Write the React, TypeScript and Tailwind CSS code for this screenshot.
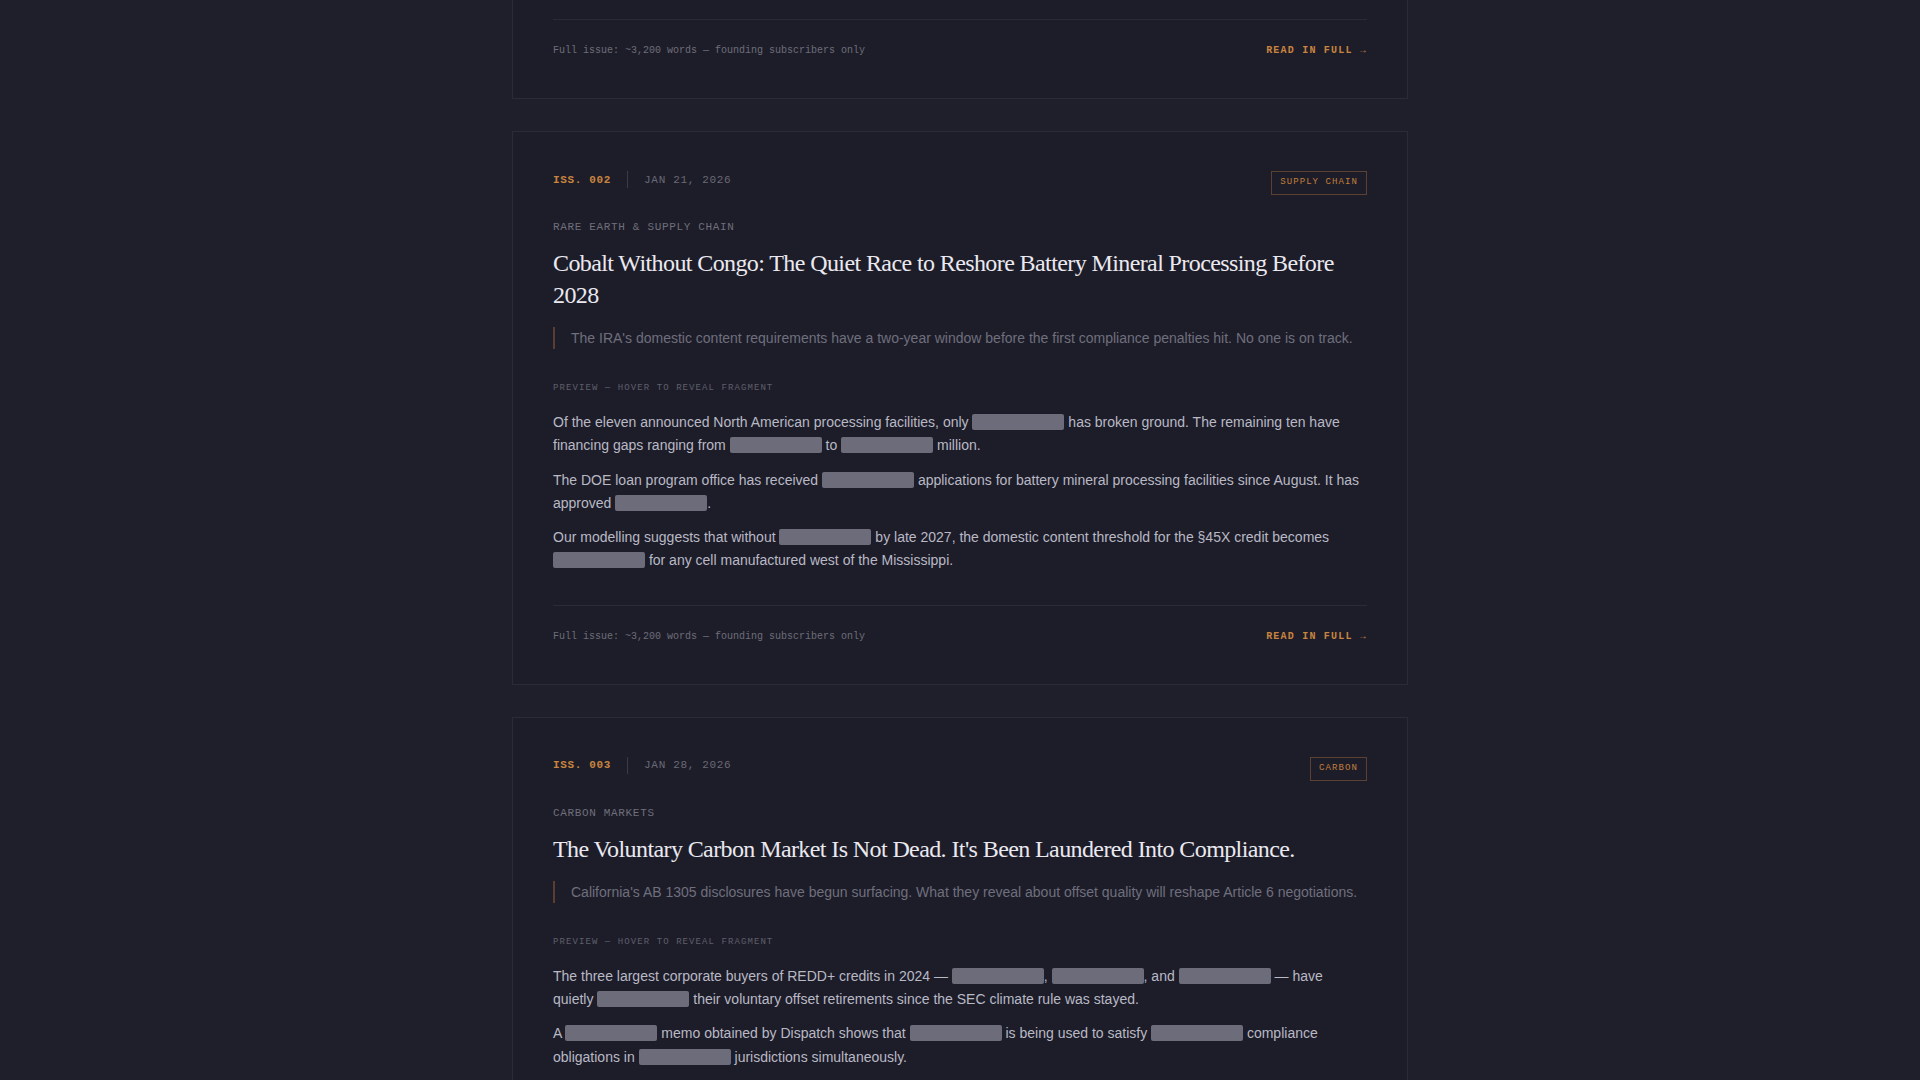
import React from 'react';

type Piece = string | null;

const issues = [
  {
    num: '002',
    date: 'JAN 21, 2026',
    tag: 'SUPPLY CHAIN',
    category: 'RARE EARTH & SUPPLY CHAIN',
    title: 'Cobalt Without Congo: The Quiet Race to Reshore Battery Mineral Processing Before 2028',
    dek: "The IRA's domestic content requirements have a two-year window before the first compliance penalties hit. No one is on track.",
    paras: [
      ['Of the eleven announced North American processing facilities, only ', null, ' has broken ground. The remaining ten have financing gaps ranging from ', null, ' to ', null, ' million.'],
      ['The DOE loan program office has received ', null, ' applications for battery mineral processing facilities since August. It has approved ', null, '.'],
      ['Our modelling suggests that without ', null, ' by late 2027, the domestic content threshold for the §45X credit becomes ', null, ' for any cell manufactured west of the Mississippi.'],
    ] as Piece[][],
  },
  {
    num: '003',
    date: 'JAN 28, 2026',
    tag: 'CARBON',
    category: 'CARBON MARKETS',
    title: "The Voluntary Carbon Market Is Not Dead. It's Been Laundered Into Compliance.",
    dek: "California's AB 1305 disclosures have begun surfacing. What they reveal about offset quality will reshape Article 6 negotiations.",
    paras: [
      ['The three largest corporate buyers of REDD+ credits in 2024 — ', null, ', ', null, ', and ', null, ' — have quietly ', null, ' their voluntary offset retirements since the SEC climate rule was stayed.'],
      ['A ', null, ' memo obtained by Dispatch shows that ', null, ' is being used to satisfy ', null, ' compliance obligations in ', null, ' jurisdictions simultaneously.'],
    ] as Piece[][],
  },
];

const mono = "font-['Liberation_Mono','DejaVu_Sans_Mono',monospace]";
const sans = "font-['Liberation_Sans',Arial,sans-serif]";

function Redacted() {
  return <span className="inline-block w-[92px] h-[16px] rounded-[2px] bg-[#6c6c7b] align-[-3px]" />;
}

function Footer() {
  return (
    <div className={`mt-8 border-t border-[#2a2a38] pt-6 flex items-center justify-between ${mono} text-[10px] leading-[14px]`}>
      <span className="text-[#6d6d79]">Full issue: ~3,200 words — founding subscribers only</span>
      <a className="text-[#c9843f] font-bold tracking-[0.12em] cursor-pointer">READ IN FULL →</a>
    </div>
  );
}

function IssueCard({ issue }: { issue: (typeof issues)[number] }) {
  return (
    <article className="border border-[#2a2a38] bg-[#1d1d29] px-10 pt-[39px] pb-10">
      <div className="flex items-start justify-between">
        <div className={`flex items-center gap-4 ${mono} text-[11px] leading-4 tracking-[0.06em]`}>
          <span className="text-[#c9843f] font-bold">ISS. {issue.num}</span>
          <span className="w-px h-[17px] bg-[#3a3a48]" />
          <span className="text-[#6a6a76]">{issue.date}</span>
        </div>
        <span className={`h-6 px-2 border border-[#5a4131] flex items-center ${mono} text-[9px] tracking-[0.12em] text-[#c27d3d]`}>
          {issue.tag}
        </span>
      </div>

      <div className={`mt-6 ${mono} text-[11px] leading-4 tracking-[0.06em] text-[#6f6f7b]`}>{issue.category}</div>

      <h2 className="mt-3 font-['Liberation_Serif','Times_New_Roman',serif] text-[24px] leading-8 tracking-[-0.025em] text-[#ebe9f0]">
        {issue.title}
      </h2>

      <p className={`mt-4 border-l-2 border-[#5b3e31] pl-4 ${sans} text-[14px] leading-[22px] text-[#6f6f7d]`}>
        {issue.dek}
      </p>

      <div className={`mt-[31px] ${mono} text-[9px] leading-4 tracking-[0.12em] text-[#5f5f6b]`}>
        PREVIEW — HOVER TO REVEAL FRAGMENT
      </div>

      <div className={`mt-[15px] space-y-[11px] ${sans} text-[14px] leading-[23.3px] text-[#b9b9c5]`}>
        {issue.paras.map((p, i) => (
          <p key={i}>
            {p.map((piece, j) => (piece === null ? <Redacted key={j} /> : <React.Fragment key={j}>{piece}</React.Fragment>))}
          </p>
        ))}
      </div>

      <Footer />
    </article>
  );
}

export default function App() {
  return (
    <div className="min-h-screen bg-[#1f1f2b]">
      <div className="mx-auto w-[896px] space-y-8">
        {/* tail of issue 001, scrolled above the fold */}
        <article className="border-x border-b border-[#2a2a38] bg-[#1d1d29] px-10 pb-10 pt-[19px]">
          <div className="-mt-8">
            <Footer />
          </div>
        </article>
        {issues.map((issue) => (
          <IssueCard key={issue.num} issue={issue} />
        ))}
      </div>
    </div>
  );
}
